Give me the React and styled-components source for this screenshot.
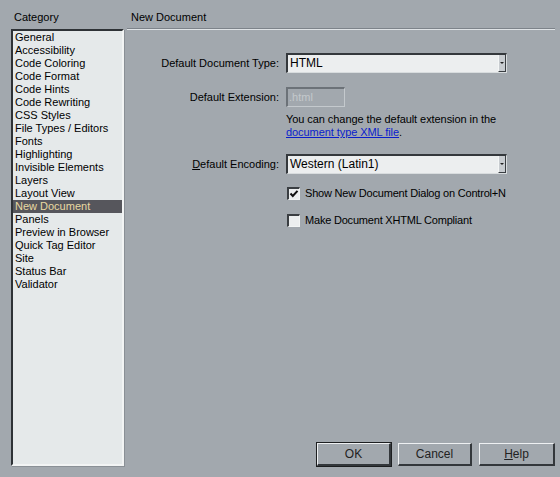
import React, { useState } from 'react';
import styled, { createGlobalStyle } from 'styled-components';

const GlobalStyle = createGlobalStyle`
  html, body {
    margin: 0;
    padding: 0;
    background: #a2a8ae;
  }
  body {
    font-family: "Liberation Sans", Arial, sans-serif;
    font-size: 11px;
    color: #000;
  }
`;

const Dialog = styled.div`
  display: flex;
  width: 560px;
  height: 477px;
  background: #a2a8ae;
  box-sizing: border-box;
`;

const Sidebar = styled.div`
  display: flex;
  flex-direction: column;
  width: 127px;
  padding: 11px 0 11px 11px;
  box-sizing: border-box;
`;

const Caption = styled.div`
  height: 18px;
  line-height: 13px;
  padding-left: 3px;
`;

const CategoryList = styled.ul`
  flex: 1;
  list-style: none;
  margin: 0;
  padding: 0;
  width: 113px;
  box-sizing: border-box;
  background: #e5e9ea;
  border-top: 2px solid #2e3236;
  border-left: 2px solid #2e3236;
  border-right: 2px solid #f2f4f4;
  border-bottom: 2px solid #f2f4f4;
  box-shadow: 1px 1px 0 #8a9096;
`;

const CategoryItem = styled.li`
  height: 13px;
  line-height: 13px;
  padding-left: 2px;
  white-space: nowrap;
  background: ${p => (p.$active ? '#56565c' : 'transparent')};
  color: ${p => (p.$active ? '#e9d9a2' : '#000')};
  cursor: default;
`;

const Main = styled.div`
  flex: 1;
  display: flex;
  flex-direction: column;
  padding: 11px 5px 11px 0;
  box-sizing: border-box;
`;

const PanelTitle = styled.div`
  line-height: 13px;
  padding: 0 0 4px 4px;
  border-bottom: 1px solid #7d838a;
  box-shadow: 0 1px 0 #dfe3e6;
`;

const Form = styled.div`
  display: grid;
  grid-template-columns: 152px 221px;
  column-gap: 7px;
  margin-top: 24px;
  align-items: center;
`;

const Label = styled.label`
  text-align: right;
  white-space: nowrap;
  color: #000;
  margin-top: ${p => p.$gap || 0}px;
`;

const Key = styled.span`
  text-decoration: underline;
`;

const SelectBox = styled.div`
  position: relative;
  height: 20px;
  box-sizing: border-box;
  background: #eceeef;
  border-top: 2px solid #34383c;
  border-left: 2px solid #34383c;
  border-right: 1px solid #d8dcde;
  border-bottom: 1px solid #d8dcde;
  padding-left: 2px;
  line-height: 16px;
  font-size: 12px;
  margin-top: ${p => p.$gap || 0}px;
`;

const DropButton = styled.span`
  position: absolute;
  top: 0;
  right: 0;
  bottom: 0;
  width: 6px;
  background: #c8ccd0;
  border-left: 1px solid #f4f6f6;
  border-right: 1px solid #3a3e42;
  border-bottom: 1px solid #3a3e42;
  &::after {
    content: '';
    position: absolute;
    left: 1px;
    top: 7px;
    border-left: 2px solid transparent;
    border-right: 2px solid transparent;
    border-top: 2px solid #222;
  }
`;

const TextInput = styled.div`
  width: 59px;
  height: 20px;
  box-sizing: border-box;
  border-top: 2px solid #6c7278;
  border-left: 2px solid #6c7278;
  border-right: 1px solid #c4c9cd;
  border-bottom: 1px solid #c4c9cd;
  color: #c4c8cc;
  line-height: 16px;
  padding-left: 1px;
  margin-top: ${p => p.$gap || 0}px;
`;

const Hint = styled.div`
  grid-column: 2;
  line-height: 13px;
  margin-top: 6px;
  white-space: nowrap;
  letter-spacing: -0.07px;
`;

const DocLink = styled.a`
  color: #0a1ecc;
  text-decoration: underline;
`;

const Options = styled.div`
  display: flex;
  flex-direction: column;
  gap: 14px;
  margin: 13px 0 0 160px;
`;

const Option = styled.label`
  display: flex;
  align-items: center;
  gap: 5px;
  line-height: 13px;
  letter-spacing: -0.2px;
  cursor: default;
`;

const Box = styled.span`
  position: relative;
  width: 13px;
  height: 13px;
  box-sizing: border-box;
  background: #eceeef;
  border-top: 2px solid #3a3e42;
  border-left: 2px solid #3a3e42;
  border-right: 1px solid #f2f4f4;
  border-bottom: 1px solid #f2f4f4;
  svg {
    position: absolute;
    left: 0;
    top: 0;
  }
`;

const Footer = styled.div`
  margin-top: auto;
  display: flex;
  justify-content: flex-end;
  gap: 7px;
`;

const Button = styled.button`
  width: ${p => p.$w || 74}px;
  height: 23px;
  box-sizing: border-box;
  font-family: "Liberation Sans", Arial, sans-serif;
  font-size: 12px;
  color: #222;
  background: #a2a8ae;
  border-top: 1px solid #eef0f2;
  border-left: 1px solid #eef0f2;
  border-right: 2px solid #33373b;
  border-bottom: 2px solid #33373b;
  outline: ${p => (p.$primary ? '1px solid #1c1e20' : 'none')};
  outline-offset: 0;
  padding: 0;
`;

const categories = [
  'General',
  'Accessibility',
  'Code Coloring',
  'Code Format',
  'Code Hints',
  'Code Rewriting',
  'CSS Styles',
  'File Types / Editors',
  'Fonts',
  'Highlighting',
  'Invisible Elements',
  'Layers',
  'Layout View',
  'New Document',
  'Panels',
  'Preview in Browser',
  'Quick Tag Editor',
  'Site',
  'Status Bar',
  'Validator',
];

const Check = () => (
  <svg width="10" height="10" viewBox="0 0 10 10">
    <path d="M1.5 4.5 L3.8 7 L8.5 1.8" fill="none" stroke="#111" strokeWidth="2" />
  </svg>
);

const Checkbox = ({ checked, onToggle, children }) => (
  <Option onClick={onToggle}>
    <Box>{checked && <Check />}</Box>
    {children}
  </Option>
);

export default function App() {
  const [selected, setSelected] = useState('New Document');
  const [showDialog, setShowDialog] = useState(true);
  const [xhtml, setXhtml] = useState(false);

  return (
    <>
      <GlobalStyle />
      <Dialog>
        <Sidebar>
          <Caption>Category</Caption>
          <CategoryList>
            {categories.map(c => (
              <CategoryItem key={c} $active={c === selected} onClick={() => setSelected(c)}>
                {c}
              </CategoryItem>
            ))}
          </CategoryList>
        </Sidebar>
        <Main>
          <PanelTitle>New Document</PanelTitle>
          <Form>
            <Label>Default Document Type:</Label>
            <SelectBox>
              HTML
              <DropButton />
            </SelectBox>

            <Label $gap={14}>Default Extension:</Label>
            <TextInput $gap={14}>.html</TextInput>

            <Hint>
              You can change the default extension in the
              <br />
              <DocLink href="#">document type XML file</DocLink>.
            </Hint>

            <Label $gap={15}>
              <Key>D</Key>efault Encoding:
            </Label>
            <SelectBox $gap={15}>
              Western (Latin1)
              <DropButton />
            </SelectBox>
          </Form>
          <Options>
            <Checkbox checked={showDialog} onToggle={() => setShowDialog(v => !v)}>
              Show New Document Dialog on Control+N
            </Checkbox>
            <Checkbox checked={xhtml} onToggle={() => setXhtml(v => !v)}>
              Make Document XHTML Compliant
            </Checkbox>
          </Options>
          <Footer>
            <Button $primary>OK</Button>
            <Button>Cancel</Button>
            <Button $w={76}>
              <Key>H</Key>elp
            </Button>
          </Footer>
        </Main>
      </Dialog>
    </>
  );
}
